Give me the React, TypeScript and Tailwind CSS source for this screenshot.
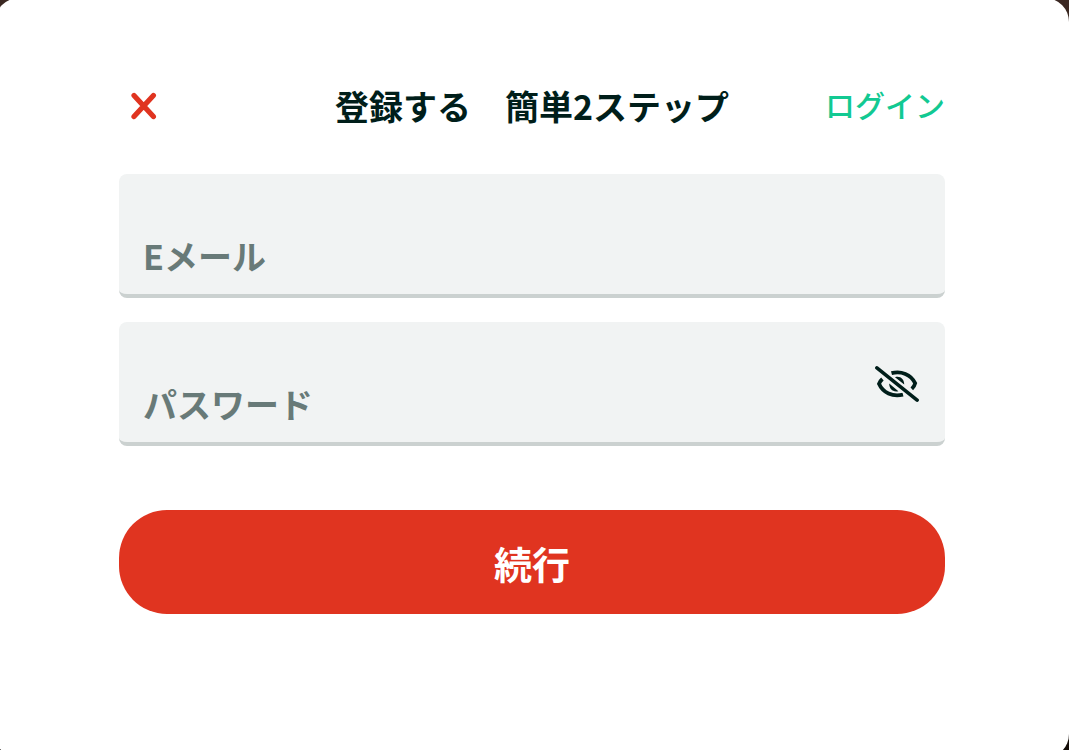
import { useState } from "react";

function CloseIcon() {
  return (
    <svg viewBox="0 0 26 28" className="h-7 w-[26px]" aria-hidden="true">
      <path
        d="M3 3.4 22.4 24.6M22.4 3.4 3 24.6"
        fill="none"
        stroke="currentColor"
        strokeWidth="5.2"
        strokeLinecap="round"
      />
    </svg>
  );
}

function EyeOffIcon() {
  return (
    <svg viewBox="0 0 44 36" className="h-9 w-11" aria-hidden="true">
      <path
        d="M20 11.2C24.8 9.4 29.4 13 29.2 18.6ZM14.2 17.6C14.2 23.4 18.4 26.6 23.4 25.2Z"
        fill="currentColor"
      />
      <g fill="none" stroke="currentColor" strokeWidth="3.8">
        <path d="M16.5 7.2C26 4.6 36 8.3 40.2 17.2C39.7 19.4 38.6 21.2 36.8 22.8" />
        <path d="M7.4 13C5.8 14.4 4.6 16 4 17.8C7.8 26.6 17.5 31.2 28 28.6" />
      </g>
      {/* gap on both sides of the slash */}
      <path d="M6 5.2 38 30.8" stroke="#f1f3f3" strokeWidth="7" />
      <path
        d="M1.9 1.9 42.1 34.1"
        stroke="currentColor"
        strokeWidth="3.6"
        strokeLinecap="round"
      />
    </svg>
  );
}

type FieldProps = {
  id: string;
  label: string;
  type: string;
  children?: React.ReactNode;
};

function Field({ id, label, type, children }: FieldProps) {
  return (
    <div className="relative">
      <input
        id={id}
        type={type}
        placeholder=" "
        className="peer block h-[124px] w-full rounded-lg border-b-4 border-[#cbd1d0] bg-[#f1f3f3] px-6 pt-10 text-[34px] text-[#001e1a] outline-none"
      />
      <label
        htmlFor={id}
        className="pointer-events-none absolute bottom-[18px] left-6 text-[34px] leading-12 font-bold text-[#687a78] peer-[:not(:placeholder-shown)]:bottom-18 peer-[:not(:placeholder-shown)]:text-2xl"
      >
        {label}
      </label>
      {children}
    </div>
  );
}

export default function App() {
  const [visible, setVisible] = useState(false);

  return (
    <div className="h-screen overflow-hidden bg-linear-to-b from-[#3b2822] to-[#140d08] font-['Noto_Sans_CJK_JP',sans-serif]">
      <main className="-mt-0.5 -ml-[5px] h-[calc(100%+10px)] rounded-3xl bg-white px-8 pt-20">
        <div className="mx-auto max-w-[826px]">
          <header className="grid grid-cols-[1fr_auto_1fr] items-center">
            <button
              type="button"
              aria-label="閉じる"
              className="ml-3 justify-self-start text-[#e03420]"
            >
              <CloseIcon />
            </button>
            <h1 className="text-[34px] leading-14 font-bold text-[#001e1a]">
              登録する　簡単2ステップ
            </h1>
            <a
              href="#login"
              className="self-start justify-self-end text-[30px] leading-13 font-medium text-[#12c992]"
            >
              ログイン
            </a>
          </header>

          <form
            className="mt-10 flex flex-col gap-6"
            onSubmit={(e) => e.preventDefault()}
          >
            <Field id="email" label="Eメール" type="email" />
            <Field
              id="password"
              label="パスワード"
              type={visible ? "text" : "password"}
            >
              <button
                type="button"
                aria-label="パスワードを表示"
                aria-pressed={visible}
                onClick={() => setVisible(!visible)}
                className="absolute top-11 right-[26px] text-[#001e1a]"
              >
                <EyeOffIcon />
              </button>
            </Field>
            <button
              type="submit"
              className="mt-10 h-[104px] rounded-[48px] bg-[#e03420] text-[38px] font-bold text-white"
            >
              続行
            </button>
          </form>
        </div>
      </main>
    </div>
  );
}
